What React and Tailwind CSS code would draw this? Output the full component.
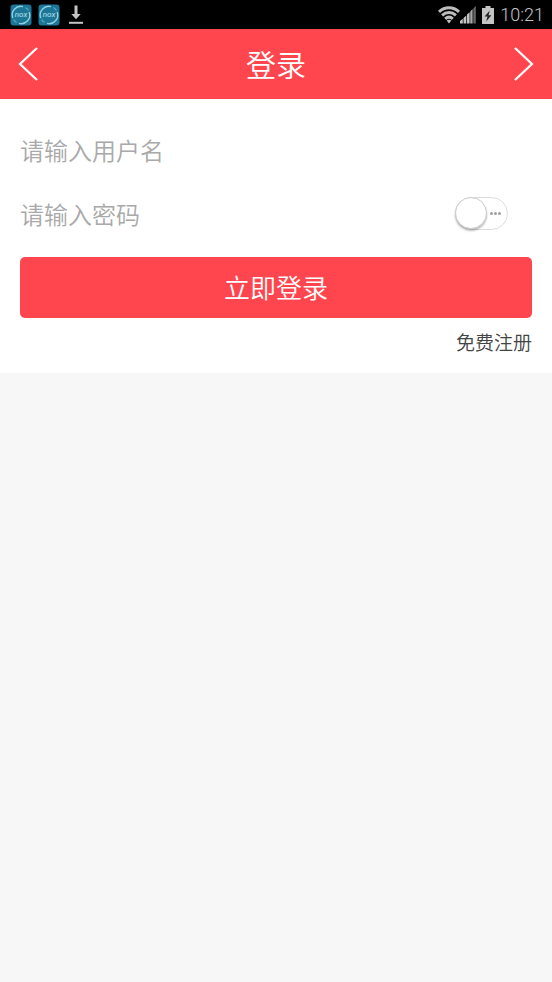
import { useState } from "react";

function NoxIcon() {
  return (
    <svg width="22" height="22" viewBox="0 0 22 22" aria-hidden="true">
      <rect x="0.5" y="0.5" width="21" height="21" rx="3" fill="#1d7696" />
      <path d="M2.8 14a8.6 8.6 0 0 1 10.2-11.4M19.2 8a8.6 8.6 0 0 1-10.2 11.4" fill="none" stroke="#8fd0e2" strokeWidth="1.4" />
      <path d="M15.4 3.6a8.6 8.6 0 0 1 3 2.8M6.6 18.4a8.6 8.6 0 0 1-3-2.8" fill="none" stroke="#4fa9c4" strokeWidth="1.2" />
      <text x="11" y="13.4" textAnchor="middle" fontSize="8" fontStyle="italic" fontWeight="400" fontFamily="Roboto, sans-serif" fill="#b4e2ee">
        nox
      </text>
    </svg>
  );
}

function DownloadIcon() {
  return (
    <svg width="14" height="20" viewBox="0 0 14 20" fill="#c4c4c4" aria-hidden="true">
      <path d="M5.5 0.5h3v8.5h3.2L7 14.2 2.3 9h3.2z" />
      <rect x="0" y="16.8" width="14" height="2" />
    </svg>
  );
}

function WifiIcon() {
  return (
    <svg width="22" height="18" viewBox="0 0 22 18" fill="none" stroke="#bdbdbd" strokeWidth="3" aria-hidden="true">
      <path d="M1 5.8C6.8 0.4 15.2 0.4 21 5.8" />
      <path d="M4.1 9.4C8.2 5.6 13.8 5.6 17.9 9.4" />
      <path d="M7.2 12.9C9.5 10.8 12.5 10.8 14.8 12.9" />
      <path d="M8.6 14.6Q11 12.9 13.4 14.6L11 17.4z" fill="#bdbdbd" stroke="none" />
    </svg>
  );
}

function SignalIcon() {
  return (
    <svg width="16" height="18" viewBox="0 0 16 18" aria-hidden="true">
      <path d="M0 17.5V15l2.8-2.2v4.7zM3.5 17.5v-5.6l2.8-2.4v8z" fill="#c4c4c4" />
      <path d="M7 17.5V8.6l2.6-2.4v11.3z" fill="#c4c4c4" />
      <path d="M10.2 17.5V5.5L12.6 3v14.5z" fill="#a5a5a5" />
      <path d="M13.3 17.5v-15L15.8 0v17.5z" fill="#666666" />
    </svg>
  );
}

function BatteryIcon() {
  return (
    <svg width="12" height="18" viewBox="0 0 12 18" aria-hidden="true">
      <path d="M3.5 0h5v2H12v16H0V2h3.5z" fill="#c4c4c4" />
      <path d="M7.8 4.5 2.6 10.6h2.9L4.2 15.6l5.2-6.3H6.5z" fill="#222222" />
    </svg>
  );
}

function Chevron({ d }) {
  return (
    <svg width="20" height="36" viewBox="0 0 20 36" fill="none" stroke="#ffffff" strokeWidth="2.2" aria-hidden="true">
      <path d={d} />
    </svg>
  );
}

function StatusBar() {
  return (
    <div className="flex h-[29px] items-center justify-between bg-black pr-2 pl-2.5">
      <div className="flex items-center gap-1.5">
        <NoxIcon />
        <NoxIcon />
        <div className="pl-[3px]">
          <DownloadIcon />
        </div>
      </div>
      <div className="flex items-center">
        <WifiIcon />
        <SignalIcon />
        <div className="px-1.5">
          <BatteryIcon />
        </div>
        <time className="font-[Roboto,sans-serif] text-lg leading-7 font-light text-[#c4c4c4]">10:21</time>
      </div>
    </div>
  );
}

export default function App() {
  const [username, setUsername] = useState("");
  const [password, setPassword] = useState("");
  const [visible, setVisible] = useState(false);

  return (
    <div className="min-h-screen bg-[#f7f7f7] font-['Noto_Sans_CJK_SC',sans-serif] font-[350]">
      <StatusBar />

      <header className="flex h-[70px] items-center justify-between bg-[#ff464e] px-[18px] text-white">
        <button type="button" aria-label="返回">
          <Chevron d="M19 2 2 18l17 16" />
        </button>
        <h1 className="pb-[3px] text-3xl">登录</h1>
        <button type="button" aria-label="前进">
          <Chevron d="M1 2l17 16L1 34" />
        </button>
      </header>

      <form onSubmit={(e) => e.preventDefault()} className="bg-white px-5 pt-[18px] pb-3">
        <input
          type="text"
          aria-label="用户名"
          placeholder="请输入用户名"
          value={username}
          onChange={(e) => setUsername(e.target.value)}
          className="block h-16 w-full text-2xl outline-none placeholder:text-[#a9a9a9]"
        />
        <div className="flex h-16 items-center pr-6">
          <input
            type={visible ? "text" : "password"}
            aria-label="密码"
            placeholder="请输入密码"
            value={password}
            onChange={(e) => setPassword(e.target.value)}
            className="h-16 min-w-0 flex-1 text-2xl outline-none placeholder:text-[#a9a9a9]"
          />
          <label className="relative flex h-[33px] w-[53px] cursor-pointer items-center justify-end rounded-full border border-[#dddddd] pr-1.5">
            <input
              type="checkbox"
              aria-label="显示密码"
              checked={visible}
              onChange={(e) => setVisible(e.target.checked)}
              className="peer absolute inset-0 cursor-pointer opacity-0"
            />
            <span className="pointer-events-none flex gap-px">
              <i className="size-[3px] rounded-full bg-[#a0a0a0]" />
              <i className="size-[3px] rounded-full bg-[#a0a0a0]" />
              <i className="size-[3px] rounded-full bg-[#a0a0a0]" />
            </span>
            <span className="pointer-events-none absolute -top-px -left-px size-8 rounded-full border border-[#cccccc] bg-white shadow-[0_2px_2px_rgba(0,0,0,0.25)] transition-transform peer-checked:translate-x-5" />
          </label>
        </div>
        <button type="submit" className="mt-3 block h-[61px] w-full rounded-[5px] bg-[#ff464e] pb-[3px] text-[26px] text-white">
          立即登录
        </button>
        <div className="mt-1 flex justify-end">
          <a href="#register" className="text-[19px] leading-[39px] text-[#444444]">
            免费注册
          </a>
        </div>
      </form>
    </div>
  );
}
